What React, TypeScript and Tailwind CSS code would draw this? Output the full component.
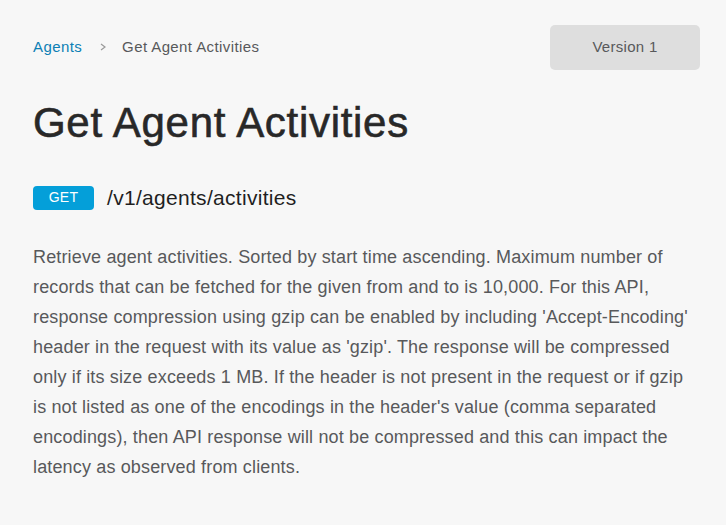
export default function App() {
  return (
    <div className="min-h-[525px] w-full bg-[#f7f7f7] pl-[33px] pr-[26px] pt-[25px]" style={{ fontFamily: '"Liberation Sans", Arial, sans-serif' }}>
      <div className="flex items-center justify-between">
        <div className="-mt-[1px] flex items-center text-[15px] tracking-[0.4px]">
          <span className="text-[#0d80b5]">Agents</span>
          <span className="ml-[16px] mr-[14px] text-[#999]">
            <svg width="10" height="10" viewBox="0 0 10 10"><path d="M3 2 L7 5 L3 8" fill="none" stroke="#9a9a9a" strokeWidth="1.2" /></svg>
          </span>
          <span className="text-[#58595b]">Get Agent Activities</span>
        </div>
        <div className="flex h-[45px] w-[150px] items-center justify-center rounded-[5px] bg-[#dedede] text-[15px] tracking-[0.3px] text-[#58595b]">
          Version 1
        </div>
      </div>
      <h1 className="mt-[28px] text-[42px] font-medium leading-[50px] tracking-[0.7px] text-[#282828] [-webkit-text-stroke:0.6px_#282828]">Get Agent Activities</h1>
      <div className="mt-[34px] flex items-center">
        <span className="flex h-[24px] w-[61px] items-center justify-center rounded-[4px] bg-[#049fd9] text-[14px] tracking-[0.3px] text-white">GET</span>
        <span className="ml-[13px] text-[21px] tracking-[0.3px] text-[#1f1f1f]">/v1/agents/activities</span>
      </div>
      <p className="mt-[28px] text-[18px] leading-[30px] tracking-[0.15px] text-[#58595b]">
        Retrieve agent activities. Sorted by start time ascending. Maximum number of records that can be fetched for the given from and to is 10,000. For this API, response compression using gzip can be enabled by including 'Accept-Encoding' header in the request with its value as 'gzip'. The response will be compressed only if its size exceeds 1 MB. If the header is not present in the request or if gzip is not listed as one of the encodings in the header's value (comma separated encodings), then API response will not be compressed and this can impact the latency as observed from clients.
      </p>
    </div>
  );
}
